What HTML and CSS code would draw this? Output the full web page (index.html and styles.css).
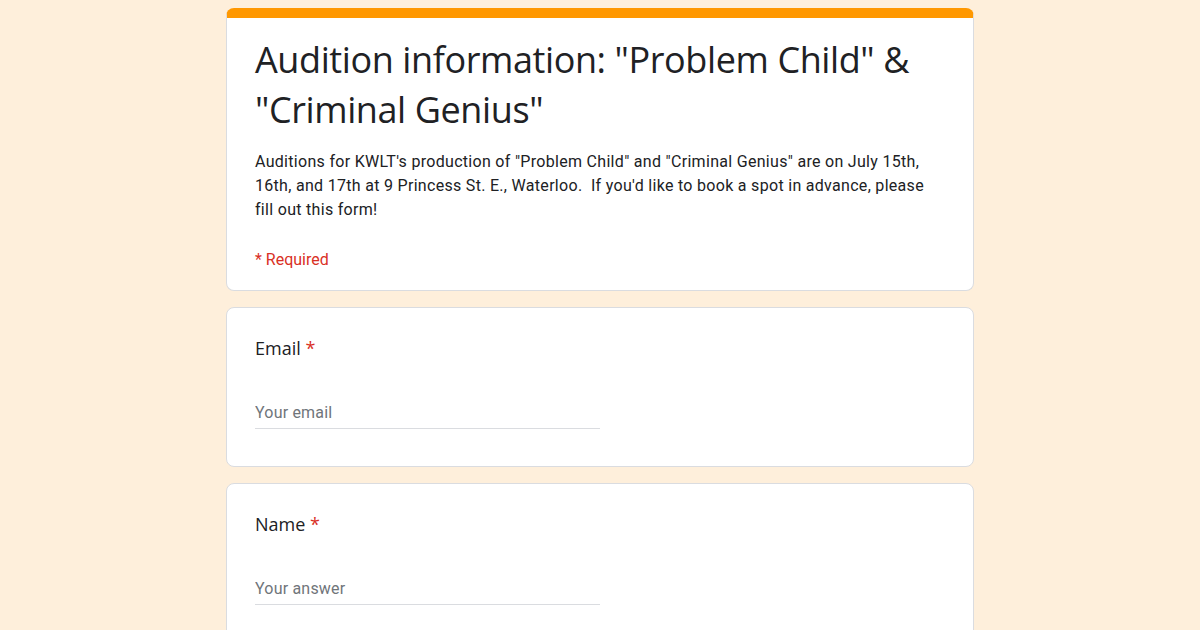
FILE: index.html
```html
<!DOCTYPE html>
<html lang="en">
<head>
  <meta charset="UTF-8">
  <title>Audition information</title>
  <link rel="stylesheet" href="styles.css">
</head>
<body>
  <main class="form">
    <section class="card card-head">
      <h1 class="form-title">Audition information: "Problem Child" &amp; "Criminal Genius"</h1>
      <p class="form-desc">Auditions for KWLT's production of "Problem Child" and "Criminal Genius" are on July 15th, 16th, and 17th at 9 Princess St. E., Waterloo.&nbsp; If you'd like to book a spot in advance, please fill out this form!</p>
      <p class="required-note">* Required</p>
    </section>

    <section class="card question">
      <label class="q-label" for="email">Email <span class="star">*</span></label>
      <input type="email" id="email" class="q-input" placeholder="Your email">
    </section>

    <section class="card question">
      <label class="q-label" for="name">Name <span class="star">*</span></label>
      <input type="text" id="name" class="q-input" placeholder="Your answer">
    </section>
  </main>
</body>
</html>
```

FILE: styles.css
```css
html, body {
  margin: 0;
  padding: 0;
}

body {
  background-color: #feefdb;
  font-family: Roboto, "Liberation Sans", sans-serif;
  color: #202124;
  overflow: hidden;
}

.form {
  width: 748px;
  margin: 8px auto 0;
  display: flex;
  flex-direction: column;
  gap: 16px;
}

.card {
  background-color: white;
  border: 1px solid #dadce0;
  border-radius: 8px;
  padding: 28px 28px 37px;
}

.card-head {
  border-top: 10px solid #ff9800;
  padding: 17px 28px 18px;
}

.form-title {
  margin: 0;
  font-family: "Open Sans", sans-serif;
  font-weight: 400;
  font-size: 36px;
  line-height: 50px;
  letter-spacing: -0.4px;
}

.form-desc {
  margin: 15px 0 0;
  font-size: 16px;
  line-height: 24px;
  letter-spacing: 0.3px;
}

.required-note {
  margin: 26px 0 0;
  color: #d93025;
  font-size: 16px;
  line-height: 24px;
}

.question {
  display: flex;
  flex-direction: column;
  align-items: flex-start;
}

.q-label {
  font-family: "Open Sans", sans-serif;
  font-size: 18px;
  line-height: 24px;
}

.star {
  color: #d93025;
}

.q-input {
  margin-top: 36px;
  width: 345px;
  height: 32px;
  padding: 0;
  border: none;
  border-bottom: 1px solid #dadce0;
  font-family: Roboto, sans-serif;
  font-size: 16px;
  letter-spacing: 0.2px;
  color: #202124;
  background: transparent;
  outline: none;
}

.q-input::placeholder {
  color: #70757a;
}
```
